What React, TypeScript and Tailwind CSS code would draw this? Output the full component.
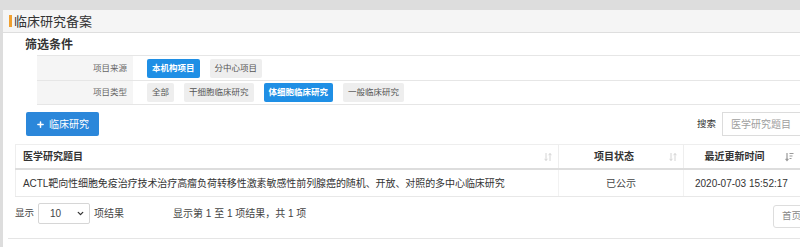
import { ChevronDown, Plus } from 'lucide-react';

const font = { fontFamily: '"Liberation Sans", "Noto Sans CJK SC", sans-serif' };

function SortBoth() {
  return (
    <svg width="8" height="10" viewBox="0 0 8 10" fill="none" stroke="#d4d4d4" strokeWidth="1">
      <path d="M2 1v7.5M0.6 6.8 2 8.5 3.4 6.8" />
      <path d="M6 9V1.5M4.6 3.2 6 1.5 7.4 3.2" />
    </svg>
  );
}

function SortDesc() {
  return (
    <svg width="9" height="10" viewBox="0 0 9 10" fill="none" stroke="#9a9a9a" strokeWidth="1.2">
      <path d="M2 1v7.5M0.6 6.8 2 8.5 3.4 6.8" />
      <path d="M4.5 1.5h4M4.5 4h3M4.5 6.5h2" />
    </svg>
  );
}

function FilterBtn({ label, active }: { label: string; active?: boolean }) {
  return (
    <span
      className={
        active
          ? 'flex h-[19px] items-center rounded-[2px] bg-[#1f8fe5] px-[5px] text-[8.5px] font-bold text-white'
          : 'flex h-[19px] items-center rounded-[2px] bg-[#eeeeee] px-[5px] text-[8.5px] text-[#555]'
      }
    >
      {label}
    </span>
  );
}

const filters = [
  { label: '项目来源', options: ['本机构项目', '分中心项目'], active: 0, h: 'h-[25px]' },
  { label: '项目类型', options: ['全部', '干细胞临床研究', '体细胞临床研究', '一般临床研究'], active: 2, h: 'h-[24px]' },
];

export default function App() {
  return (
    <div className="h-[247px] w-[800px] overflow-hidden bg-[#dddddd] pl-[3px] pt-[10px]" style={font}>
      <div className="h-[240px] w-[900px] bg-white">
        {/* Panel title */}
        <div className="flex h-[23px] items-center border-b border-[#dedede] bg-[#f5f5f5] pl-[6px]">
          <span className="h-[12px] w-[3px] bg-[#f0a030]" />
          <span className="ml-[2px] text-[13px] leading-none text-[#333]">临床研究备案</span>
        </div>

        {/* Filters */}
        <div className="pl-[22px] pt-[4px] text-[12px] font-bold leading-[16px] text-[#333]">筛选条件</div>
        <div className="ml-[34px] mt-[2px] border-b border-[#e6e6e6]">
          {filters.map((f) => (
            <div key={f.label} className={`flex border-t border-[#e6e6e6] ${f.h}`}>
              <div className="flex w-[96px] items-center justify-end bg-[#f5f5f5] pr-[6px] text-[8.5px] text-[#666]">
                {f.label}
              </div>
              <div className="flex items-center gap-[10px] pl-[14px]">
                {f.options.map((o, i) => (
                  <FilterBtn key={o} label={o} active={i === f.active} />
                ))}
              </div>
            </div>
          ))}
        </div>

        {/* Toolbar */}
        <div className="mt-[7px] flex h-[24px] items-center">
          <button className="ml-[23px] flex h-[24px] items-center gap-[4px] rounded-[2px] bg-[#2b87da] px-[10px] text-[10px] text-white">
            <Plus size={9} strokeWidth={4} />
            临床研究
          </button>
          <span className="ml-[598px] text-[9.5px] text-[#333]">搜索</span>
          <div className="ml-[6px] flex h-[24px] w-[120px] items-center border border-[#dcdcdc] pl-[8px] text-[10px] text-[#a0a0a0]">
            医学研究题目
          </div>
        </div>

        {/* Table */}
        <div className="ml-[12px] mt-[8px] w-[820px] text-[10px]">
          <div className="grid h-[26px] grid-cols-[543px_125px_127px_1fr] border-b-2 border-t border-b-[#dddddd] border-t-[#eeeeee] font-bold text-[#333]">
            <div className="flex items-center justify-between border-l border-[#eeeeee] pl-[7px] pr-[6px]">
              <span>医学研究题目</span>
              <SortBoth />
            </div>
            <div className="flex items-center border-l border-[#eeeeee] pr-[6px]">
              <span className="flex-1 text-center">项目状态</span>
              <SortBoth />
            </div>
            <div className="flex items-center border-l border-[#eeeeee] pr-[16px]">
              <span className="flex-1 text-center">最近更新时间</span>
              <SortDesc />
            </div>
            <div className="border-l border-[#eeeeee]" />
          </div>
          <div className="grid h-[27px] grid-cols-[543px_125px_127px_1fr] border-b border-[#e8e8e8] text-[#333]">
            <div className="flex items-center border-l border-[#eeeeee] pl-[7px] tracking-[-0.08px]">
              ACTL靶向性细胞免疫治疗技术治疗高瘤负荷转移性激素敏感性前列腺癌的随机、开放、对照的多中心临床研究
            </div>
            <div className="flex items-center justify-center border-l border-[#f2f2f2] text-[#444]">已公示</div>
            <div className="flex items-center border-l border-[#f2f2f2] pl-[11px]">2020-07-03 15:52:17</div>
            <div className="border-l border-[#f2f2f2]" />
          </div>
        </div>

        {/* Footer */}
        <div className="mt-[6px] flex h-[25px] items-start">
          <div className="flex w-[770px] items-center pl-[12px] text-[10px] text-[#444]">
            <span className="text-[9.5px]">显示</span>
            <div className="ml-[4px] flex h-[21px] w-[52px] items-center justify-between rounded-[2px] border border-[#d6d6d6] pl-[11px] pr-[4px]">
              <span>10</span>
              <ChevronDown size={9} strokeWidth={3.5} className="text-[#333]" />
            </div>
            <span className="ml-[4px]">项结果</span>
            <span className="ml-[49px]">显示第 1 至 1 项结果，共 1 项</span>
          </div>
          <span className="mt-[2px] flex h-[23px] items-center rounded-[3px] border border-[#dddddd] pl-[8px] pr-[10px] text-[9.5px] text-[#888]">
            首页
          </span>
        </div>
        <div className="mx-[5px] mt-[10px] border-t border-[#e5e5e5]" />
      </div>
    </div>
  );
}
